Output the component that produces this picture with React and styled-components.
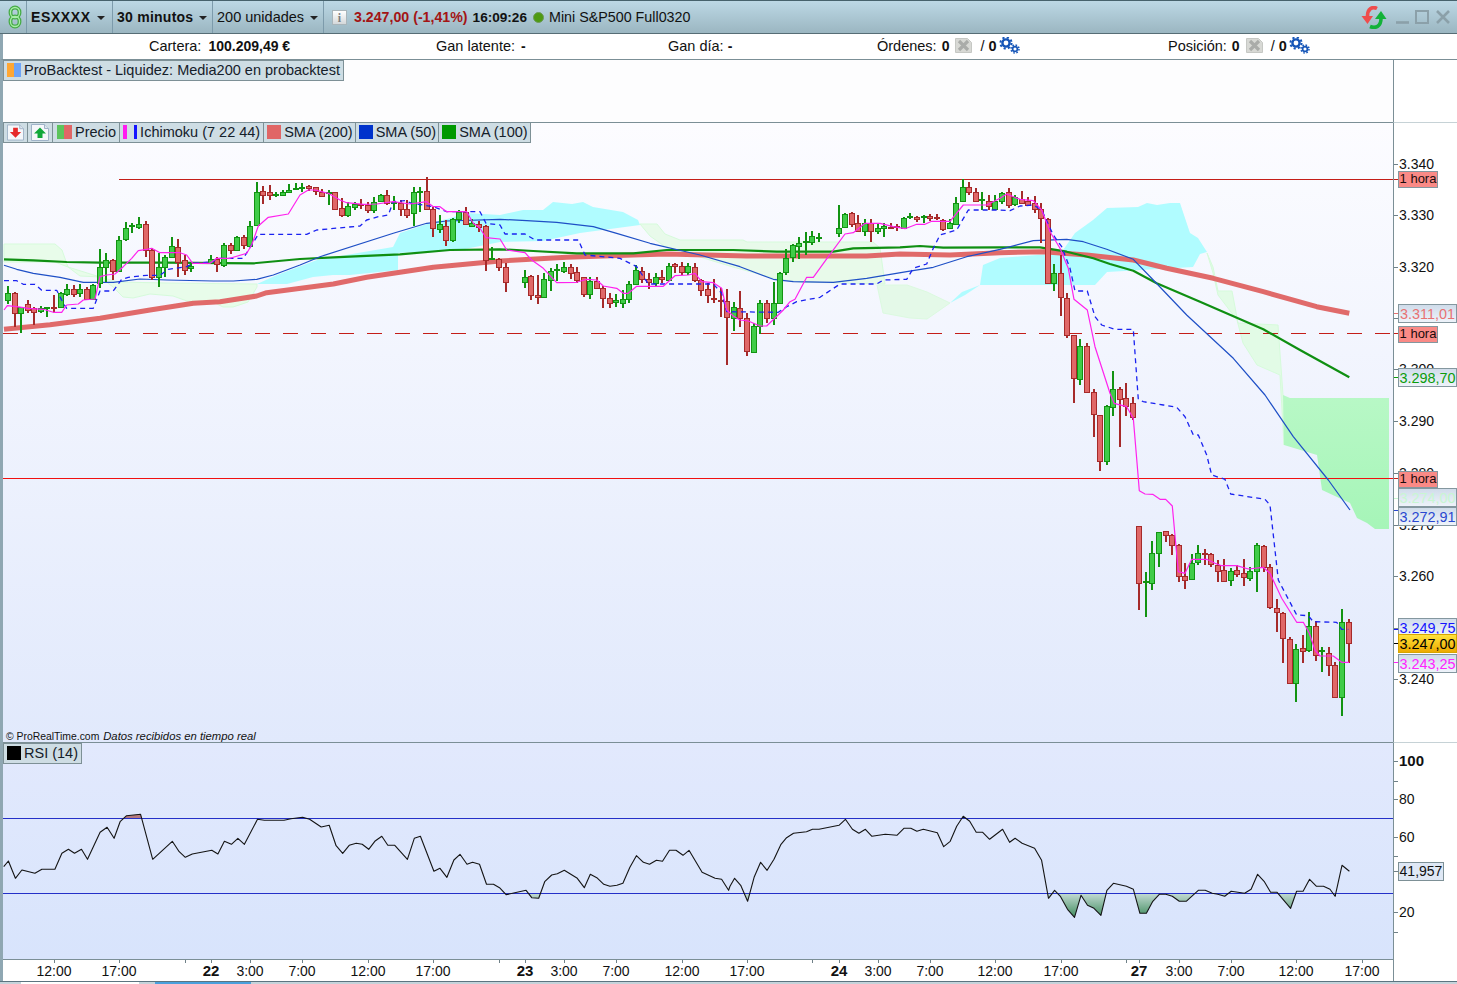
import React from "react";
import styled, { createGlobalStyle } from "styled-components";

const GlobalStyle = createGlobalStyle`
  html, body {
    margin: 0;
    padding: 0;
    background: #fff;
    overflow: hidden;
  }
  * { box-sizing: border-box; }
`;

// candle strings: colour + x, wick top, wick bottom, body top, body bottom
// values were read at 3x from the corner given with each group
const candleGroups = [
  [0, 160, `g25,378,432,400,420 r46,395,500,400,460 g64,440,520,440,460 r85,420,458,433,450 r103,440,495,445,455 g124,438,458,443,453 g142,440,472,441,443 r163,405,458,440,441 g184,395,445,400,440 g202,373,408,387,402 r223,375,412,388,402 g241,373,410,387,400 r262,380,420,388,416 g280,372,418,376,416 g301,268,385,322,368 g319,278,365,300,322 r340,298,360,300,332 g358,228,335,240,332 g379,185,242,203,238 g397,188,218,196,198 g418,172,208,193,201 r439,182,292,193,270 r457,265,360,270,350 g478,278,380,320,352 g496,285,352,292,322 g517,232,292,258,292 r535,238,350,260,305 r556,285,345,300,330 g574,310,335,318,325 g633,286,312,298,310 r652,290,335,298,312 g673,248,320,255,315 r694,250,282,255,270 g712,228,272,232,270 r733,225,268,230,256 g751,183,260,198,258 g772,66,198,97,195 r790,78,132,94,104 r811,75,120,97,104 g829,95,110,101,103 g850,90,108,95,104 g868,72,100,90,97 g889,70,88,85,86 g907,70,95,82,84 r928,75,92,78,85 r949,82,105,82,92 r967,88,108,95,107 g988,90,135,95,97 r1006,97,150,97,148 r1027,115,172,145,166 g1045,125,172,138,165 g1066,125,150,132,140 r1084,118,148,132,134 r1105,125,158,135,150 g1123,112,160,125,150 g1144,102,125,105,122 r1162,90,135,105,130 g1183,108,150,126,128 r1204,120,168,130,146 r1222,120,175,146,164 g1243,82,198,97,160 g1261,82,155,92,97 r1282,52,150,94,148 r1300,140,230,148,205 g1321,165,218,192,206 r1339,180,258,198,240 g1360,175,245,178,240 g1378,150,188,156,176 r1399,140,195,155,192 g1417,178,200,188,198 r1438,182,215,192,200 r1459,195,332,198,300 g1477,260,300,295,297 r1498,295,332,297,322`],
  [500, 160, `r17,310,395,322,365 g75,330,385,352,365 r94,345,420,348,405 r114,345,432,406,412 g133,340,415,358,412 g153,325,392,333,360 g171,313,362,328,330 g192,305,338,320,332 r213,312,358,322,338 r232,322,368,335,360 r253,352,412,352,403 g271,352,417,364,403 r292,352,388,364,385 r310,378,443,385,415 r331,400,443,415,428 g349,402,440,421,427 g370,390,445,418,428 g388,362,428,373,418 g409,315,375,330,373 r427,320,368,332,358 r448,340,388,358,365 g469,340,378,352,368 r487,330,368,352,358 g508,310,362,318,360 r526,310,338,313,318 r547,305,345,318,335 g565,310,345,318,335 r586,310,365,320,360 r604,358,408,360,390 r625,368,430,388,405 r643,358,430,413,417 r664,385,470,420,422 r682,388,614,422,472 g703,425,512,442,475 r721,394,500,445,475 r742,460,588,475,574 g763,488,580,498,575 g781,420,522,430,498 r802,420,488,430,475 g823,366,495,428,475 g841,335,432,338,430 g859,268,345,295,335 g880,252,305,256,290 g898,232,298,250,258 g919,215,285,242,244 g937,212,255,228,245 g958,218,245,230,232 g1017,135,232,203,220 g1036,158,200,162,200 r1056,157,200,160,193 r1075,165,212,190,212 g1096,178,228,188,212 r1114,178,245,188,212 g1135,188,222,205,212 g1153,190,230,198,203 r1174,190,208,200,202 r1192,193,212,198,202 g1213,170,205,173,203 g1231,160,178,167,172 r1252,168,185,172,176 g1272,165,190,167,172 r1291,162,182,167,173 r1312,162,180,172,175 r1330,178,212,180,206 g1351,178,208,190,205 g1369,112,195,130,193 g1390,58,126,82,124 r1408,67,105,82,95 r1429,85,124,95,122 g1447,97,150,118,120 r1468,105,150,122,138 g1486,105,148,122,146`],
  [1000, 180, `g6,35,72,40,62 r27,25,85,35,75 g46,45,78,50,72 r66,33,72,58,70 r85,50,78,62,75 r104,48,100,68,88 r123,70,188,86,115 r145,115,310,118,308 g163,252,332,280,308 r184,225,408,278,352 r202,340,475,355,466 r223,465,668,466,595 g241,478,615,498,598 r262,490,638,498,636 r283,628,772,636,703 r301,704,872,704,842 g322,675,855,678,842 g340,573,708,628,680 r360,622,800,628,656 r379,610,708,655,678 r400,652,720,670,710`],
  [1100, 470, `r118,168,420,168,338 g138,305,440,334,336 g157,212,360,248,338 g178,185,292,187,248 r197,182,215,184,194 r217,192,255,194,224 r238,222,335,224,317 r256,280,357,317,329 g277,252,328,278,328 g295,226,285,250,275 r316,238,285,250,252 r334,250,292,253,283 r355,270,335,285,302 r373,268,335,300,332 g394,295,348,304,330 r412,285,322,300,312 r433,268,348,310,322 g451,290,332,304,323 g472,220,365,226,304 r493,225,305,229,292 r511,283,418,290,410 r532,388,485,413,425 r550,425,578,428,505 r571,502,640,508,640 g589,522,695,538,640 r610,495,580,535,543 g628,427,545,468,540 r649,452,572,467,555 g667,530,605,540,543 r688,532,618,548,584 r706,575,685,586,680 g727,418,737,455,680 r747,448,578,455,520`],
];

const candles = candleGroups.flatMap(([x0, y0, text]) =>
  text.split(" ").map((item) => {
    const [x, wickTop, wickBottom, top, bottom] = item.slice(1).split(",").map(Number);
    return {
      up: item[0] === "g",
      x: Math.round(x0 + x / 3),
      wickTop: y0 + wickTop / 3,
      wickBottom: y0 + wickBottom / 3,
      top: Math.round(y0 + top / 3),
      bottom: Math.round(y0 + bottom / 3),
    };
  })
);

const toPoints = (groups) =>
  groups.flatMap(([x0, y0, sx, list]) => {
    const nums = list.trim().split(/[\s,]+/).map(Number);
    const out = [];
    for (let i = 0; i < nums.length; i += 2) {
      out.push([+(x0 + nums[i] / sx).toFixed(1), +(y0 + nums[i + 1] / 3).toFixed(1)]);
    }
    return out;
  });

const toPath = (pts) => "M" + pts.map((p) => p.join(" ")).join("L");

const tenkan = toPath(toPoints([
  [0, 160, 3, "12,450 22,437 50,440 85,445 130,448 160,457 185,457 200,435 235,432 250,420 285,417 300,350 320,345 345,342 370,320 395,295 415,272 440,268 455,265 480,278 540,278 560,285 578,310 630,310 650,295 690,295 740,280 755,255 775,198 805,172 865,162 900,105 925,90 945,90 985,100 1020,120 1040,128 1090,133 1130,132 1180,125 1230,132 1280,125 1300,140 1320,140 1340,155 1400,155 1420,190 1440,205 1458,233 1500,237"],
  [500, 160, 3, "20,270 75,278 95,300 130,325 170,368 230,367 260,358 290,360 310,378 350,385 370,400 385,400 410,379 490,379 525,347 565,345 585,340 605,365 640,368 665,385 680,450 700,468 720,480 745,483 780,498 800,498 850,450 870,425 885,418 920,352 940,352 985,290 1035,222 1060,218 1095,190 1140,190 1180,200 1215,206 1250,193 1275,193 1295,184 1350,184 1390,135 1460,135 1500,115"],
  [1000, 180, 3, "20,42 40,50 60,58 100,62 125,90 150,155 180,205 205,265 222,358 262,390 285,500 330,640 342,670 380,680 400,715 415,895"],
  [1100, 470, 3, "118,62 135,72 158,73 180,88 197,88 217,108 235,305 255,310 275,268 320,268 345,280 365,287 410,287 445,297 490,292 510,310 545,385 590,457 610,457 628,490 645,540 660,558 700,558 725,577 747,577"],
]));

const kijun = toPath(toPoints([
  [0, 160, 3, "12,362 50,362 70,373 105,373 125,391 170,391 190,430 200,445 280,445 300,393 340,393 365,358 385,352 440,346 480,346 505,328 560,320 580,310 640,305 650,295 730,295 755,255 775,223 920,223 950,210 1080,198 1100,180 1135,170 1165,165 1180,125 1215,122 1235,130 1300,140 1340,155 1440,155 1458,190"],
  [500, 160, 3, "0,195 15,222 75,222 105,240 235,240 255,285 360,295 410,320 445,372 640,372 665,400 680,455 835,457 860,440 890,425 960,412 1020,372 1130,372 1150,360 1220,358 1240,325 1280,312 1300,265 1320,225 1370,210 1405,150 1500,150"],
  [1000, 180, 3, "30,92 60,78 100,75 125,90 160,165 185,200 210,265 225,333 262,333 285,410 305,435 345,448 400,448 415,658 430,665 490,675 530,682 555,710 580,765 595,765 620,825 635,885"],
  [1100, 470, 3, "375,28 392,72 495,88 510,105 535,330 590,435 625,437 640,455 710,457 725,478 745,478"],
]));

const sma50 = toPath(toPoints([
  [0, 160, 3, "12,316 50,328 100,340 180,352 250,367 340,367 420,357 500,360 640,363 700,363 770,358 820,345 900,315 960,290 1180,220 1280,190 1340,183 1500,178"],
  [500, 160, 3, "80,182 170,187 280,200 350,220 450,250 600,285 720,320 820,358 880,365 1000,367 1100,355 1220,335 1300,322 1400,290 1500,268"],
  [1000, 180, 3, "100,182 200,178 250,185 320,208 400,238 460,300 560,405 700,535 795,645 880,770 985,900"],
  [1100, 470, 3, "750,120"],
]));

const sma100 = toPath(toPoints([
  [0, 160, 3, "12,298 100,301 200,306 300,308 500,308 760,310 900,297 1000,292 1200,283 1350,270 1500,268"],
  [500, 160, 3, "100,273 230,280 400,280 500,270 700,270 830,275 1000,275 1060,265 1200,262 1260,258 1330,263 1500,262"],
  [1000, 180, 3, "120,202 200,215 280,235 330,252 400,272 470,310 600,365 790,448 900,510 1048,592"],
]));

const sma200 = toPath(toPoints([
  [0, 160, 3, "12,508 150,494 300,475 450,450 580,430 660,425 770,408 800,398 1000,372 1100,352 1300,322 1500,303"],
  [500, 160, 3, "200,292 400,285 500,282 740,288 1100,288 1200,282 1350,285 1500,278"],
  [1000, 180, 3, "130,215 260,225 400,240 500,265 640,295 790,335 950,380 1048,400"],
]));

const rsiPoints = toPoints([
  [0, 725, 1568 / 730, "8,425 18,408 33,460 47,435 75,445 90,433 118,433 133,385 147,373 160,385 175,373 188,403 215,322 230,307 245,340 258,290 272,272 302,268 328,403 370,349 385,380 398,397 413,387 455,376 468,387 482,349 497,358 511,340 525,358 553,283 568,286 610,286 625,281 650,277 665,283 690,306 707,301 722,362 736,385 750,361 765,355 778,358 792,373 805,349 820,334 833,361 848,361 875,403 890,340 903,334 932,439 945,430 960,457 975,405 988,388 1003,418 1015,412 1030,418 1045,478 1060,478 1073,488 1087,509 1130,496 1142,518 1157,520 1170,470 1185,450 1197,446 1212,436 1240,460 1255,488 1268,448 1282,458 1297,478 1310,484 1325,481 1338,475 1353,427 1367,392 1382,412 1395,418 1410,406 1423,409 1438,376 1452,376 1467,391 1480,376 1508,442 1522,451 1536,460 1550,463 1565,496"],
  [730, 725, 1568 / 727, "0,484 10,460 23,481 38,529 52,457 66,412 80,436 95,403 110,358 122,338 137,325 165,320 178,313 192,313 235,301 249,283 264,313 278,325 292,313 306,334 335,328 360,331 375,310 390,310 403,319 417,313 447,323 461,365 475,349 489,304 503,274 517,289 531,322 545,322 560,343 588,313 603,352 615,340 630,355 657,370 672,406 687,520 700,496 713,515 728,553 743,577 757,511 771,541 785,550 800,571 813,496 827,475 855,484 870,493 884,565 898,565 912,529 926,508 940,508 954,514 969,529 984,529 1010,496 1025,496 1040,505 1052,508 1067,514 1081,499 1110,505 1124,493 1138,448 1152,469 1166,502 1180,502 1209,550 1222,499 1236,499 1250,463 1265,484 1280,484 1294,493 1305,514 1320,421 1336,439"],
]);
const rsiLine = toPath(rsiPoints);

const clouds = [
  { fill: "#e8fcea", edge: "#d6fbdb", points: "4,244 55,244 62,250 68,267 80,276 100,277 118,282 167,283 257,284 257,287 248,302 233,307 223,307 213,302 187,301 173,296 150,294 133,298 123,297 113,287 100,277 68,267 55,262 4,262" },
  { fill: "#b0fcff", points: "257,284 277,275 317,260 393,247 400,233 430,223 447,219 467,213 500,215 523,210 543,210 553,202 572,204 583,202 593,207 623,212 638,220 640,225 580,233 543,241 500,242 460,250 398,253 398,270 350,275 333,275 313,277 287,284" },
  { fill: "#e8faea", edge: "#d6fbdb", points: "640,224 657,224 665,234 680,240 743,240 747,242 873,242 880,248 885,284 800,282 777,279 733,267 700,257 667,248 650,236" },
  { fill: "#e4f9e8", edge: "#dcfae0", points: "877,285 907,285 927,292 950,303 927,319 910,318 883,313" },
  { fill: "#b0fcff", points: "950,303 962,292 980,285 983,265 1000,258 1061,253 1075,233 1093,220 1107,208 1138,207 1147,203 1157,205 1170,203 1180,203 1190,233 1198,238 1207,252 1200,254 1193,267 1107,272 1095,285 1000,285 980,285 965,295" },
  { fill: "#e2fbe6", edge: "#d6fbdb", points: "1207,253 1213,267 1218,291 1232,291 1238,323 1278,325 1283,395 1284,445 1280,375 1257,365 1243,343 1237,320 1218,295 1213,273" },
  { fill: "url(#cloudEnd)", points: "1283,395 1290,398 1389,398 1389,529 1375,529 1367,523 1357,518 1350,503 1322,490 1317,455 1284,445" },
];

const priceTicks = [
  { y: 164, label: "3.340" },
  { y: 215, label: "3.330" },
  { y: 267, label: "3.320" },
  { y: 318, label: "3.310" },
  { y: 369, label: "3.300" },
  { y: 421, label: "3.290" },
  { y: 473, label: "3.280" },
  { y: 525, label: "3.270" },
  { y: 576, label: "3.260" },
  { y: 628, label: "3.250" },
  { y: 679, label: "3.240" },
];

const priceTags = [
  { top: 171, tick: 179, kind: "hour", text: "1 hora" },
  { top: 304, tick: 313, color: "#e87272", text: "3.311,01" },
  { top: 326, tick: 333, kind: "hour", text: "1 hora" },
  { top: 368, tick: 377, color: "#0c9c0c", text: "3.298,70" },
  { top: 471, tick: 478, kind: "hour", text: "1 hora" },
  { top: 488, tick: 498, color: "#c8f6d2", text: "3.274,00" },
  { top: 507, tick: 510, color: "#2a48d0", text: "3.272,91" },
  { top: 618, tick: 629, color: "#1414ff", text: "3.249,75" },
  { top: 634, tick: 643, kind: "last", color: "#000", text: "3.247,00" },
  { top: 654, tick: 662, color: "#ff22ff", text: "3.243,25" },
];

const rsiTicks = [
  { y: 761, label: "100", strong: true },
  { y: 781 },
  { y: 799, label: "80" },
  { y: 837, label: "60" },
  { y: 856 },
  { y: 912, label: "20" },
  { y: 932 },
];

const timeLabels = [
  [54, "12:00"], [119, "17:00"], [211, "22", 1], [250, "3:00"], [302, "7:00"], [368, "12:00"], [433, "17:00"],
  [525, "23", 1], [564, "3:00"], [616, "7:00"], [682, "12:00"], [747, "17:00"],
  [839, "24", 1], [878, "3:00"], [930, "7:00"], [995, "12:00"], [1061, "17:00"],
  [1139, "27", 1], [1179, "3:00"], [1231, "7:00"], [1296, "12:00"], [1362, "17:00"],
];
const minorDays = [185, 499, 812, 1126];

const Page = styled.div`
  width: 1457px;
  height: 984px;
  display: flex;
  flex-direction: column;
  font-family: "Liberation Sans", Arial, sans-serif;
  font-size: 14px;
  color: #111;
  overflow: hidden;
`;

const TitleBar = styled.header`
  height: 34px;
  flex: none;
  display: flex;
  align-items: stretch;
  padding-left: 3px;
  font-size: 14.5px;
  background: linear-gradient(#bcd8e5, #9bb6c1);
  border-top: 1px solid #46626c;
  border-bottom: 1px solid #566d75;
`;

const TitleCell = styled.div`
  display: flex;
  align-items: center;
  width: ${(p) => p.$width}px;
  padding-left: ${(p) => p.$pad || 0}px;
  border-left: ${(p) => (p.$plain ? 0 : "1px solid #7d9bab")};
  font-size: ${(p) => p.$size || 14.5}px;
  font-weight: ${(p) => (p.$bold ? 700 : 400)};
  letter-spacing: ${(p) => p.$spacing || 0}px;
  white-space: nowrap;
`;

const Caret = styled.span`
  width: 0;
  height: 0;
  margin-left: ${(p) => p.$gap || 6}px;
  margin-top: 2px;
  border-left: 4px solid transparent;
  border-right: 4px solid transparent;
  border-top: 4px solid #222;
`;

const Quote = styled.span`
  color: #a31414;
  font-size: 14.2px;
  font-weight: 700;
  margin: 0 5px 0 7px;
`;

const Clock = styled.span`
  font-size: 13.6px;
  font-weight: 700;
`;

const LiveDot = styled.span`
  width: 11px;
  height: 11px;
  margin: 0 5px 0 6px;
  border-radius: 50%;
  background: #4e9a12;
  border: 1px solid #6d9a5a;
`;

const InfoIcon = styled.span`
  width: 15px;
  height: 15px;
  display: grid;
  place-items: center;
  background: linear-gradient(#fff, #d4d8da);
  border: 1px solid #a9b5ba;
  font: 700 12px "Liberation Serif", serif;
  color: #7a7f82;
`;

const WindowControls = styled.div`
  margin-left: auto;
  display: flex;
  align-items: center;
  padding-right: 6px;
  gap: 9px;
`;

const StatusBar = styled.div`
  height: 26px;
  flex: none;
  display: grid;
  grid-template-columns: 146px 287px 232px 209px 291px 1fr;
  align-items: center;
  padding-bottom: 2px;
  font-size: 14.5px;
  background: #fff;
  border-left: 3px solid #8fa7b2;
  border-bottom: 1px solid #7b8f96;
`;

const StatusItem = styled.div`
  display: flex;
  align-items: center;
  white-space: nowrap;
  grid-column: ${(p) => p.$col};
`;

const StrongValue = styled.b`
  font-size: 14px;
  margin-left: ${(p) => p.$gap ?? 5}px;
`;

const Slash = styled.span`
  margin: 0 4px 0 8px;
`;

const Body = styled.div`
  flex: 1;
  display: flex;
  flex-direction: column;
  border-left: 3px solid #8fa7b2;
`;

const Row = styled.div`
  display: grid;
  grid-template-columns: 1390px 1fr;
  height: ${(p) => p.$height}px;
  flex: none;
`;

const Plot = styled.div`
  position: relative;
  background: ${(p) => p.$bg};
  border-top: ${(p) => (p.$line ? "1px solid #7b8f96" : "0")};
  overflow: hidden;

  svg {
    display: block;
  }
`;

const Axis = styled.div`
  position: relative;
  background: #fff;
  border-left: 1px solid #7b8f96;
  border-top: ${(p) => (p.$line ? "1px solid #c6d2d6" : "0")};
`;

const LegendBar = styled.div`
  position: absolute;
  top: ${(p) => p.$top || 0}px;
  left: 0;
  display: flex;
  font-size: 14.5px;
`;

const LegendCell = styled.div`
  display: flex;
  align-items: center;
  justify-content: ${(p) => (p.$square ? "center" : "flex-start")};
  width: ${(p) => (p.$square ? "25px" : "auto")};
  height: 21px;
  padding: 0 ${(p) => (p.$tight ? 2 : 3)}px 1px 3px;
  gap: 3px;
  background: #cedde4;
  border: 1px solid #7d9096;
  border-left-width: ${(p) => (p.$first ? 1 : 0)}px;
  white-space: nowrap;
  color: #15202a;
`;

const SwatchPair = styled.span`
  display: flex;
  margin-left: ${(p) => p.$gap || 0}px;
`;

const Swatch = styled.span`
  width: ${(p) => p.$width || 14}px;
  height: 14px;
  flex: none;
  margin-left: ${(p) => p.$gap || 0}px;
  background: ${(p) => p.$bg};
`;

const Credit = styled.div`
  position: absolute;
  left: 3px;
  bottom: -1px;
  font-size: 10.4px;
  line-height: 13px;
  color: #111;

  em {
    font-size: 11.3px;
    margin-left: 1px;
  }
`;

const AxisText = styled.span`
  position: absolute;
  left: 5px;
  top: ${(p) => p.$top - 8}px;
  line-height: 16px;
  white-space: nowrap;
  font-weight: ${(p) => (p.$strong ? 700 : 400)};
  font-size: ${(p) => (p.$strong ? 15 : 14)}px;
`;

const Tick = styled.i`
  position: absolute;
  left: 0;
  top: ${(p) => p.$top}px;
  width: ${(p) => p.$width || 4}px;
  height: 1px;
  background: ${(p) => p.$color || "#6f8188"};
`;

const PriceTag = styled.div`
  position: absolute;
  left: 4px;
  top: ${(p) => p.$top}px;
  height: ${(p) => (p.$kind === "hour" ? 17 : 19)}px;
  width: ${(p) => (p.$kind === "hour" ? 40 : 59)}px;
  line-height: ${(p) => (p.$kind === "hour" ? 14 : 18)}px;
  text-align: center;
  white-space: nowrap;
  border: 1px solid ${(p) => (p.$kind === "last" ? "#d6a400" : "#84979f")};
  font-size: ${(p) => (p.$kind === "hour" ? 13 : 14.4)}px;
  color: ${(p) => p.$color || "#1a0c0c"};
  background: ${(p) =>
    p.$kind === "hour"
      ? "#fa8a86"
      : p.$kind === "last"
      ? "linear-gradient(#ffe23c, #edaa00)"
      : "linear-gradient(#d0dcea, #eef3fa)"};
`;

const ValueBox = styled.div`
  position: absolute;
  left: 4px;
  top: ${(p) => p.$top}px;
  width: 46px;
  height: 19px;
  line-height: 17px;
  text-align: center;
  background: #dfe8f5;
  border: 1px solid #7d9096;
`;

const TimeBar = styled.div`
  display: flex;
  height: 22px;
  flex: none;
`;

const TimeAxis = styled.div`
  position: relative;
  width: 1390px;
  flex: none;
  border-top: 1px solid #7b8f96;
  background: #fff;
`;

const TimeCorner = styled.div`
  flex: 1;
  border-left: 1px solid #7b8f96;
`;

const TimeLabel = styled.span`
  position: absolute;
  left: ${(p) => p.$x - 3}px;
  top: 3px;
  transform: translateX(-50%);
  line-height: 16px;
  font-weight: ${(p) => (p.$strong ? 700 : 400)};
  font-size: ${(p) => (p.$strong ? 15 : 14)}px;
`;

const TimeTick = styled.i`
  position: absolute;
  left: ${(p) => p.$x - 3}px;
  top: 0;
  width: 1px;
  height: 3px;
  background: #6f8188;
`;

const TabStrip = styled.div`
  flex: none;
  height: 3px;
  display: flex;
  background: #c5d3da;
  border-top: 1px solid #5c7480;
  margin-left: -3px;
`;

const TabPiece = styled.span`
  width: ${(p) => p.$width}px;
  margin-left: ${(p) => p.$gap || 0}px;
  background: ${(p) => p.$bg};
`;

const LinkIcon = () => (
  <svg width="14" height="24" viewBox="0 0 14 24" fill="none">
    <g stroke="#46ab46" strokeWidth="3.8">
      <rect x="2.5" y="2.5" width="9" height="10" rx="4.5" />
      <rect x="2.5" y="11.5" width="9" height="10" rx="4.5" />
    </g>
    <g stroke="#a8eea8" strokeWidth="1.3">
      <rect x="2.5" y="2.5" width="9" height="10" rx="4.5" />
      <rect x="2.5" y="11.5" width="9" height="10" rx="4.5" />
    </g>
  </svg>
);

const SyncIcon = () => (
  <svg width="26" height="23" viewBox="0 0 26 23">
    <path d="M16 2.5C11 0 6.5 3 6.5 10" fill="none" stroke="#ef4c4c" strokeWidth="3.6" />
    <path d="M0.5 10h11.5l-5.5 8z" fill="#ef4c4c" />
    <path d="M9 20.5c6 2.5 11-.5 11-8" fill="none" stroke="#12b238" strokeWidth="3.6" />
    <path d="M14 13h11.5l-5.5-8z" fill="#12b238" />
  </svg>
);

const WindowButtons = () => (
  <svg width="55" height="16" viewBox="0 0 55 16" fill="none" stroke="#8ba0a9" strokeWidth="2">
    <path d="M0 13.5h13" strokeWidth="2.6" />
    <rect x="20" y="2" width="12" height="12" />
    <path d="M41 2l12 12M53 2l-12 12" strokeWidth="2.6" />
  </svg>
);

const OrderIcon = () => (
  <svg width="17" height="15" viewBox="0 0 17 15" style={{ marginLeft: 6 }}>
    <path d="M0.5 0.5h12l4 4v10h-16z" fill="#d8d9d5" stroke="#c6c8c4" />
    <path d="M4 3l9 9M13 3l-9 9" stroke="#aaaca9" strokeWidth="3.2" />
  </svg>
);

const GearsIcon = () => (
  <svg width="21" height="17" viewBox="0 0 21 17" style={{ marginLeft: 2 }} fill="none" stroke="#1656b8">
    <circle cx="7" cy="6" r="3.6" strokeWidth="2.4" />
    <circle cx="7" cy="6" r="5.6" strokeWidth="2" strokeDasharray="2.2 2.2" />
    <circle cx="16" cy="12" r="2.4" strokeWidth="1.7" />
    <circle cx="16" cy="12" r="4" strokeWidth="1.5" strokeDasharray="1.6 1.55" />
  </svg>
);

const ArrowButton = ({ up }) => (
  <svg width="18" height="17" viewBox="0 0 18 17">
    <path d="M0.5 0.5h13l4 4v12h-17z" fill="#f5f7fa" stroke="#9fb3c8" />
    <path d="M13.5 0.5v4h4" fill="#dfe6ee" stroke="#9fb3c8" />
    <path
      d={up ? "M9 3.5l6 6h-3.5v4.5h-5V9.5H3z" : "M9 14l6-6h-3.5V3.5h-5V8H3z"}
      fill={up ? "#12a83a" : "#e62a2a"}
    />
  </svg>
);

const Candles = () =>
  candles.map((c) => {
    const edge = c.up ? "#129312" : "#a52a2a";
    return (
      <g key={c.x} shapeRendering="crispEdges">
        <rect x={c.x - 1} y={c.wickTop} width="2" height={c.wickBottom - c.wickTop} fill={edge} />
        <rect
          x={c.x - 2.5}
          y={c.top + 0.5}
          width="5"
          height={Math.max(c.bottom - c.top, 1)}
          fill={c.up ? "#40cc48" : "#e06868"}
          stroke={edge}
        />
      </g>
    );
  });

const PriceChart = () => (
  <svg width="1390" height="619" viewBox="3 123 1390 619">
    <defs>
      <linearGradient id="cloudEnd" x1="0" y1="0" x2="0" y2="1">
        <stop offset="0" stopColor="#b8f8c6" />
        <stop offset="1" stopColor="#a6f5b8" />
      </linearGradient>
    </defs>
    {clouds.map((c) => (
      <polygon key={c.points} points={c.points} fill={c.fill} stroke={c.edge || "none"} />
    ))}
    <g shapeRendering="crispEdges">
      <path d="M119 179.5H1393" stroke="#c41e18" />
      <path d="M3 333.5H1393" stroke="#c41e18" strokeDasharray="15 13" />
      <path d="M3 478.5H1393" stroke="#f01010" />
    </g>
    <g fill="none" strokeLinejoin="round">
      <path d={sma200} stroke="#e06a6a" strokeWidth="5" />
      <path d={sma100} stroke="#0f8f12" strokeWidth="2.2" />
      <path d={sma50} stroke="#1e4fc6" strokeWidth="1.2" />
    </g>
    <Candles />
    <g fill="none" strokeLinejoin="round">
      <path d={kijun} stroke="#1a22f0" strokeWidth="1.3" strokeDasharray="5 4" />
      <path d={tenkan} stroke="#ff22ee" strokeWidth="1.2" />
    </g>
  </svg>
);

const RsiChart = () => {
  const area = `${rsiLine}L1349.4 893.5L8 893.5Z`;
  const areaTop = `${rsiLine}L1349.4 818.5L8 818.5Z`;
  return (
    <svg width="1390" height="216" viewBox="3 743 1390 216">
      <defs>
        <linearGradient id="oversold" gradientUnits="userSpaceOnUse" x1="0" y1="893" x2="0" y2="918">
          <stop offset="0" stopColor="#c6dcd6" />
          <stop offset="1" stopColor="#3c8a5a" />
        </linearGradient>
        <clipPath id="belowBand">
          <rect x="3" y="893.5" width="1390" height="60" />
        </clipPath>
        <clipPath id="aboveBand">
          <rect x="3" y="780" width="1390" height="38.5" />
        </clipPath>
      </defs>
      <path d={area} fill="url(#oversold)" clipPath="url(#belowBand)" />
      <path d={areaTop} fill="#b57a80" clipPath="url(#aboveBand)" />
      <g shapeRendering="crispEdges" stroke="#2430c8">
        <path d="M3 818.5H1393" />
        <path d="M3 893.5H1393" />
      </g>
      <path d={rsiLine} fill="none" stroke="#141414" strokeWidth="1.1" strokeLinejoin="round" />
    </svg>
  );
};

const App = () => (
  <>
    <GlobalStyle />
    <Page>
      <TitleBar>
        <TitleCell $width={23} $pad={5} $plain>
          <LinkIcon />
        </TitleCell>
        <TitleCell $width={86} $pad={4} $bold $spacing={0.6} $size={14}>
          ESXXXX
          <Caret />
        </TitleCell>
        <TitleCell $width={100} $pad={4} $bold $spacing={0.25} $size={14}>
          30 minutos
          <Caret />
        </TitleCell>
        <TitleCell $width={111} $pad={4}>
          200 unidades
          <Caret />
        </TitleCell>
        <TitleCell $width={600} $pad={8} $size={14.3}>
          <InfoIcon>i</InfoIcon>
          <Quote>3.247,00 (-1,41%)</Quote>
          <Clock>16:09:26</Clock>
          <LiveDot />
          Mini S&amp;P500 Full0320
        </TitleCell>
        <WindowControls>
          <SyncIcon />
          <WindowButtons />
        </WindowControls>
      </TitleBar>

      <StatusBar>
        <StatusItem $col={2}>
          Cartera:<StrongValue $gap={7}>100.209,49 €</StrongValue>
        </StatusItem>
        <StatusItem $col={3}>
          Gan latente:<StrongValue $gap={6}>-</StrongValue>
        </StatusItem>
        <StatusItem $col={4}>
          Gan día:<StrongValue $gap={4}>-</StrongValue>
        </StatusItem>
        <StatusItem $col={5}>
          Órdenes:<StrongValue>0</StrongValue>
          <OrderIcon />
          <Slash>/</Slash>
          <b>0</b>
          <GearsIcon />
        </StatusItem>
        <StatusItem $col={6}>
          Posición:<StrongValue>0</StrongValue>
          <OrderIcon />
          <Slash>/</Slash>
          <b>0</b>
          <GearsIcon />
        </StatusItem>
      </StatusBar>

      <Body>
        <Row $height={62}>
          <Plot $bg="#fdfdfe">
            <LegendBar>
              <LegendCell $first>
                <SwatchPair>
                  <Swatch $width={7} $bg="#ffa733" />
                  <Swatch $width={7} $bg="#6ea4f6" />
                </SwatchPair>
                ProBacktest - Liquidez: Media200 en probacktest
              </LegendCell>
            </LegendBar>
          </Plot>
          <Axis />
        </Row>

        <Row $height={620}>
          <Plot $bg="linear-gradient(#fcfcff, #e1e9fc)" $line>
            <PriceChart />
            <LegendBar $top={-1}>
              <LegendCell $first $square>
                <ArrowButton />
              </LegendCell>
              <LegendCell $square>
                <ArrowButton up />
              </LegendCell>
              <LegendCell>
                <SwatchPair $gap={1}>
                  <Swatch $width={7} $bg="#5cc45c" />
                  <Swatch $width={8} $bg="#e06666" />
                </SwatchPair>
                Precio
              </LegendCell>
              <LegendCell>
                <Swatch $width={4} $bg="#ff1cf0" />
                <Swatch $width={3} $gap={4} $bg="#1414ff" />
                Ichimoku (7 22 44)
              </LegendCell>
              <LegendCell $tight>
                <Swatch $bg="#e06666" />
                SMA (200)
              </LegendCell>
              <LegendCell $tight>
                <Swatch $bg="#0033cc" />
                SMA (50)
              </LegendCell>
              <LegendCell $tight>
                <Swatch $bg="#009900" />
                SMA (100)
              </LegendCell>
            </LegendBar>
            <Credit>
              © ProRealTime.com <em>Datos recibidos en tiempo real</em>
            </Credit>
          </Plot>
          <Axis $line>
            {priceTicks.map((t) => (
              <React.Fragment key={t.label}>
                <Tick $top={t.y - 123} />
                <AxisText $top={t.y - 123}>{t.label}</AxisText>
              </React.Fragment>
            ))}
            {priceTags.map((t) => (
              <React.Fragment key={t.top}>
                <Tick $top={t.tick - 123} $color={t.kind === "hour" ? "#c41e18" : t.color} />
                <PriceTag
                  $kind={t.kind}
                  $color={t.kind === "hour" ? undefined : t.color}
                  $top={t.top - 123}
                >
                  {t.text}
                </PriceTag>
              </React.Fragment>
            ))}
          </Axis>
        </Row>

        <Row $height={217}>
          <Plot $bg="linear-gradient(#e2e9fd, #d8e4fc)" $line>
            <RsiChart />
            <LegendBar>
              <LegendCell $first>
                <Swatch $bg="#000" />
                RSI (14)
              </LegendCell>
            </LegendBar>
          </Plot>
          <Axis $line>
            {rsiTicks.map((t) => (
              <React.Fragment key={t.y}>
                <Tick $top={t.y - 743} />
                {t.label && (
                  <AxisText $top={t.y - 743} $strong={t.strong}>
                    {t.label}
                  </AxisText>
                )}
              </React.Fragment>
            ))}
            <Tick $top={871 - 743} />
            <ValueBox $top={862 - 743}>41,957</ValueBox>
          </Axis>
        </Row>

        <TimeBar>
          <TimeAxis>
            {minorDays.map((x) => (
              <TimeTick key={x} $x={x} />
            ))}
            {timeLabels.map(([x, text, strong]) => (
              <React.Fragment key={x}>
                <TimeTick $x={x} />
                <TimeLabel $x={x} $strong={strong}>
                  {text}
                </TimeLabel>
              </React.Fragment>
            ))}
          </TimeAxis>
          <TimeCorner />
        </TimeBar>

        <TabStrip>
          <TabPiece $width={118} $gap={21} $bg="#fff" />
          <TabPiece $width={96} $gap={16} $bg="#4aa0dd" />
        </TabStrip>
      </Body>
    </Page>
  </>
);

export default App;
